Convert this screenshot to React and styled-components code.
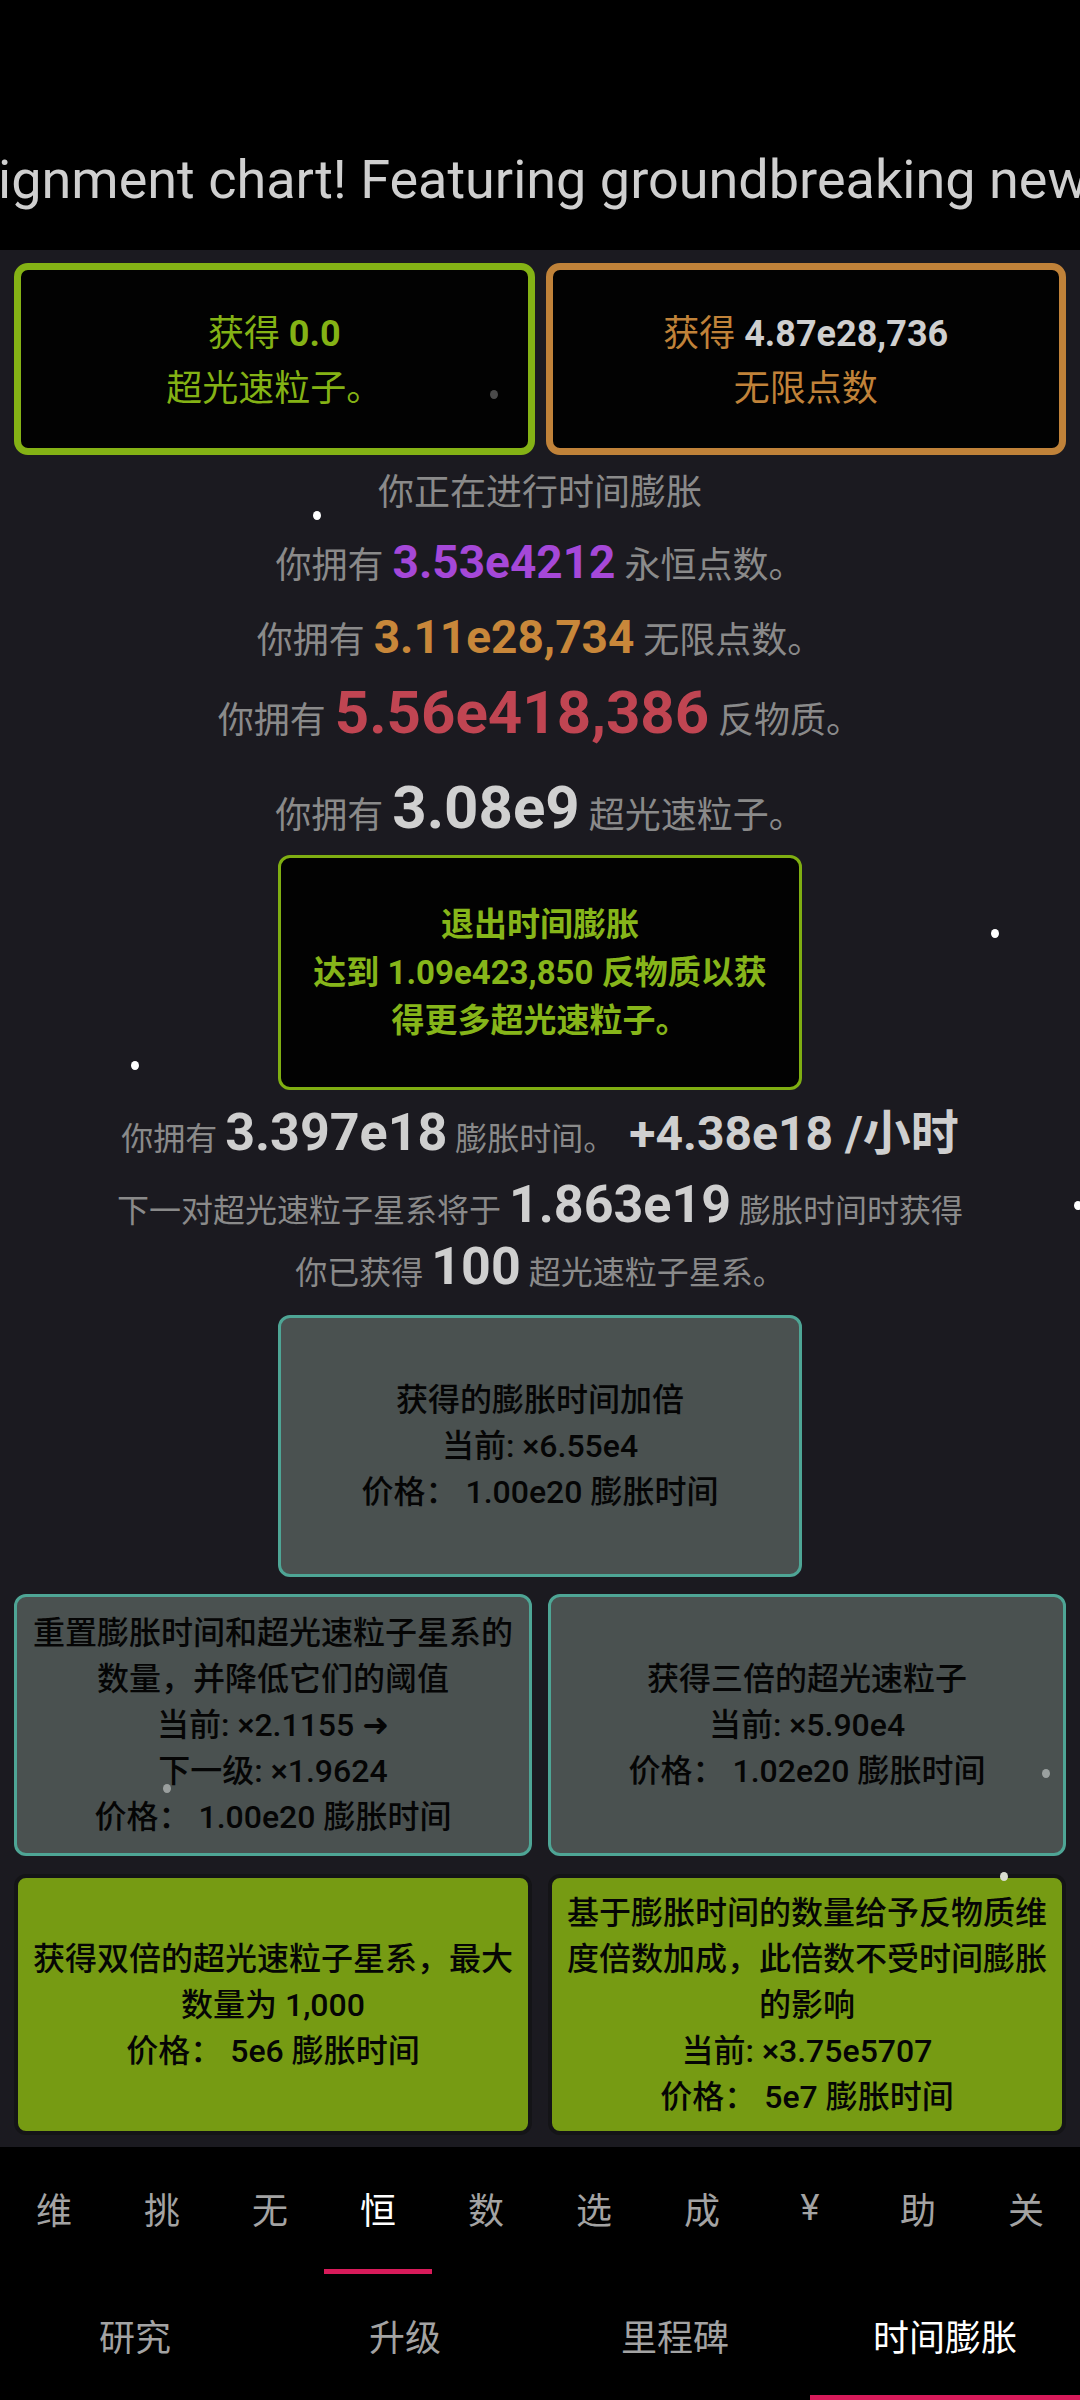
import React from "react";
import styled, { createGlobalStyle } from "styled-components";

const GlobalStyle = createGlobalStyle`
  html, body {
    margin: 0;
    padding: 0;
    background: #000;
  }
  body {
    font-family: Roboto, "Noto Sans CJK SC", sans-serif;
  }
`;

const Screen = styled.div`
  position: relative;
  width: 1080px;
  height: 2400px;
  overflow: hidden;
  background: #000;
  display: flex;
  flex-direction: column;
`;

const NewsBar = styled.div`
  height: 250px;
  box-sizing: border-box;
  padding-top: 145px;
  overflow: hidden;
  white-space: nowrap;
  font-size: 54px;
  line-height: 70px;
  color: #cfcfcf;
`;

const NewsText = styled.div`
  margin-left: -2px;
`;

const Main = styled.div`
  height: 1897px;
  box-sizing: border-box;
  padding-top: 13px;
  background: #1b1a20;
  display: flex;
  flex-direction: column;
  align-items: center;
`;

const PairRow = styled.div`
  width: 100%;
  box-sizing: border-box;
  padding: 0 14px;
  display: grid;
  grid-template-columns: 1fr 1fr;
  gap: ${(p) => p.$gap || 16}px;
  height: ${(p) => p.$height}px;
  margin-top: ${(p) => p.$top || 0}px;
`;

const ResourceBox = styled.div`
  box-sizing: border-box;
  border: 7px solid ${(p) => p.$color};
  border-radius: 14px;
  background: #020202;
  display: flex;
  flex-direction: column;
  align-items: center;
  justify-content: center;
  padding-top: 6px;
  font-size: 36px;
  line-height: 55px;
  color: ${(p) => p.$color};
`;

const BoldNum = styled.span`
  font-weight: 700;
  font-size: ${(p) => p.$size || 36}px;
  color: ${(p) => p.$color || "inherit"};
  margin-left: ${(p) => p.$gapLeft || 0}px;
`;

const StatLine = styled.div`
  width: 100%;
  text-align: center;
  white-space: nowrap;
  color: #8a8a8a;
  font-size: ${(p) => p.$size || 36}px;
  line-height: ${(p) => p.$lh}px;
  height: ${(p) => p.$lh}px;
  margin-top: ${(p) => p.$top || 0}px;
`;

const ExitButton = styled.div`
  width: 524px;
  height: 235px;
  box-sizing: border-box;
  margin-top: ${(p) => p.$top}px;
  border: 3px solid #7fae12;
  border-radius: 12px;
  background: #020202;
  display: flex;
  flex-direction: column;
  align-items: center;
  justify-content: center;
  text-align: center;
  color: #86b51a;
  font-weight: 700;
  font-size: 33px;
  line-height: 48px;
`;

const UpgradeBox = styled.div`
  box-sizing: border-box;
  width: ${(p) => (p.$single ? "524px" : "auto")};
  height: ${(p) => (p.$single ? "262px" : "auto")};
  margin-top: ${(p) => p.$top || 0}px;
  padding: 0 10px;
  border: ${(p) => (p.$bought ? "4px solid #141417" : "3px solid #4ea595")};
  border-radius: 12px;
  background: ${(p) => (p.$bought ? "#769b13" : "#4a5150")};
  display: flex;
  flex-direction: column;
  align-items: center;
  justify-content: center;
  text-align: center;
  color: #050505;
  font-weight: 500;
  font-size: 32px;
  line-height: 46px;
`;

const Arrow = styled.span`
  font-weight: 700;
  font-family: "DejaVu Sans", sans-serif;
`;

const Nav = styled.div`
  flex: 1;
  background: #000;
  display: flex;
  flex-direction: column;
`;

const TabRow = styled.div`
  display: grid;
  grid-template-columns: repeat(${(p) => p.$count}, 1fr);
  height: ${(p) => p.$height}px;
`;

const Tab = styled.div`
  box-sizing: border-box;
  display: flex;
  align-items: center;
  justify-content: center;
  font-size: 36px;
  color: ${(p) => (p.$active ? "#ffffff" : "#a3a3a3")};
  border-bottom: 5px solid ${(p) => (p.$active ? "#d81b5a" : "transparent")};
`;

const Dot = styled.div`
  position: absolute;
  left: ${(p) => p.$x - 4}px;
  top: ${(p) => p.$y - 4}px;
  width: 8px;
  height: 9px;
  border-radius: 50%;
  background: ${(p) => p.$color || "#ffffff"};
`;

const subTabs = ["维", "挑", "无", "恒", "数", "选", "成", "¥", "助", "关"];
const mainTabs = ["研究", "升级", "里程碑", "时间膨胀"];

const dots = [
  { x: 317, y: 515 },
  { x: 995, y: 933 },
  { x: 135, y: 1065 },
  { x: 1078, y: 1205 },
  { x: 494, y: 394, color: "#4a4a4a" },
  { x: 167, y: 1788, color: "#9a9f9e" },
  { x: 1046, y: 1773, color: "#9aa09f" },
  { x: 1004, y: 1876, color: "#d8dcd0" },
];

export default function App() {
  return (
    <>
      <GlobalStyle />
      <Screen>
        <NewsBar>
          <NewsText>ignment chart! Featuring groundbreaking new</NewsText>
        </NewsBar>

        <Main>
          <PairRow $height={192} $gap={11}>
            <ResourceBox $color="#84b215">
              <div>
                获得 <BoldNum>0.0</BoldNum>
              </div>
              <div>超光速粒子。</div>
            </ResourceBox>
            <ResourceBox $color="#c08239">
              <div>
                获得 <BoldNum $color="#cfcfcf">4.87e28,736</BoldNum>
              </div>
              <div>无限点数</div>
            </ResourceBox>
          </PairRow>

          <StatLine $lh={50} $top={13}>你正在进行时间膨胀</StatLine>
          <StatLine $lh={60} $top={14}>
            你拥有 <BoldNum $size={46} $color="#a548d8">3.53e4212</BoldNum> 永恒点数。
          </StatLine>
          <StatLine $lh={60} $top={15}>
            你拥有 <BoldNum $size={46} $color="#c8873a">3.11e28,734</BoldNum> 无限点数。
          </StatLine>
          <StatLine $lh={70} $top={11}>
            你拥有 <BoldNum $size={60} $color="#c04552">5.56e418,386</BoldNum> 反物质。
          </StatLine>
          <StatLine $lh={70} $top={25}>
            你拥有 <BoldNum $size={60} $color="#d0d0d0">3.08e9</BoldNum> 超光速粒子。
          </StatLine>

          <ExitButton $top={12}>
            <div>退出时间膨胀</div>
            <div>达到 1.09e423,850 反物质以获</div>
            <div>得更多超光速粒子。</div>
          </ExitButton>

          <StatLine $lh={64} $top={11} $size={32}>
            你拥有 <BoldNum $size={52} $color="#cfcfcf">3.397e18</BoldNum> 膨胀时间。
            <BoldNum $size={48} $color="#cfcfcf" $gapLeft={14}>+4.38e18 /小时</BoldNum>
          </StatLine>
          <StatLine $lh={64} $top={8} $size={32}>
            下一对超光速粒子星系将于 <BoldNum $size={52} $color="#cfcfcf">1.863e19</BoldNum> 膨胀时间时获得
          </StatLine>
          <StatLine $lh={60} $size={32}>
            你已获得 <BoldNum $size={52} $color="#cfcfcf">100</BoldNum> 超光速粒子星系。
          </StatLine>

          <UpgradeBox $single $top={18}>
            <div>获得的膨胀时间加倍</div>
            <div>当前: ×6.55e4</div>
            <div>价格： 1.00e20 膨胀时间</div>
          </UpgradeBox>

          <PairRow $height={262} $top={17}>
            <UpgradeBox>
              <div>重置膨胀时间和超光速粒子星系的</div>
              <div>数量，并降低它们的阈值</div>
              <div>
                当前: ×2.1155 <Arrow>➜</Arrow>
              </div>
              <div>下一级: ×1.9624</div>
              <div>价格： 1.00e20 膨胀时间</div>
            </UpgradeBox>
            <UpgradeBox>
              <div>获得三倍的超光速粒子</div>
              <div>当前: ×5.90e4</div>
              <div>价格： 1.02e20 膨胀时间</div>
            </UpgradeBox>
          </PairRow>

          <PairRow $height={261} $top={18}>
            <UpgradeBox $bought>
              <div>获得双倍的超光速粒子星系，最大</div>
              <div>数量为 1,000</div>
              <div>价格： 5e6 膨胀时间</div>
            </UpgradeBox>
            <UpgradeBox $bought>
              <div>基于膨胀时间的数量给予反物质维</div>
              <div>度倍数加成，此倍数不受时间膨胀</div>
              <div>的影响</div>
              <div>当前: ×3.75e5707</div>
              <div>价格： 5e7 膨胀时间</div>
            </UpgradeBox>
          </PairRow>
        </Main>

        <Nav>
          <TabRow $count={10} $height={127}>
            {subTabs.map((t, i) => (
              <Tab key={t} $active={i === 3}>
                {t}
              </Tab>
            ))}
          </TabRow>
          <TabRow $count={4} $height={126}>
            {mainTabs.map((t, i) => (
              <Tab key={t} $active={i === 3}>
                {t}
              </Tab>
            ))}
          </TabRow>
        </Nav>

        {dots.map((d, i) => (
          <Dot key={i} $x={d.x} $y={d.y} $color={d.color} />
        ))}
      </Screen>
    </>
  );
}
